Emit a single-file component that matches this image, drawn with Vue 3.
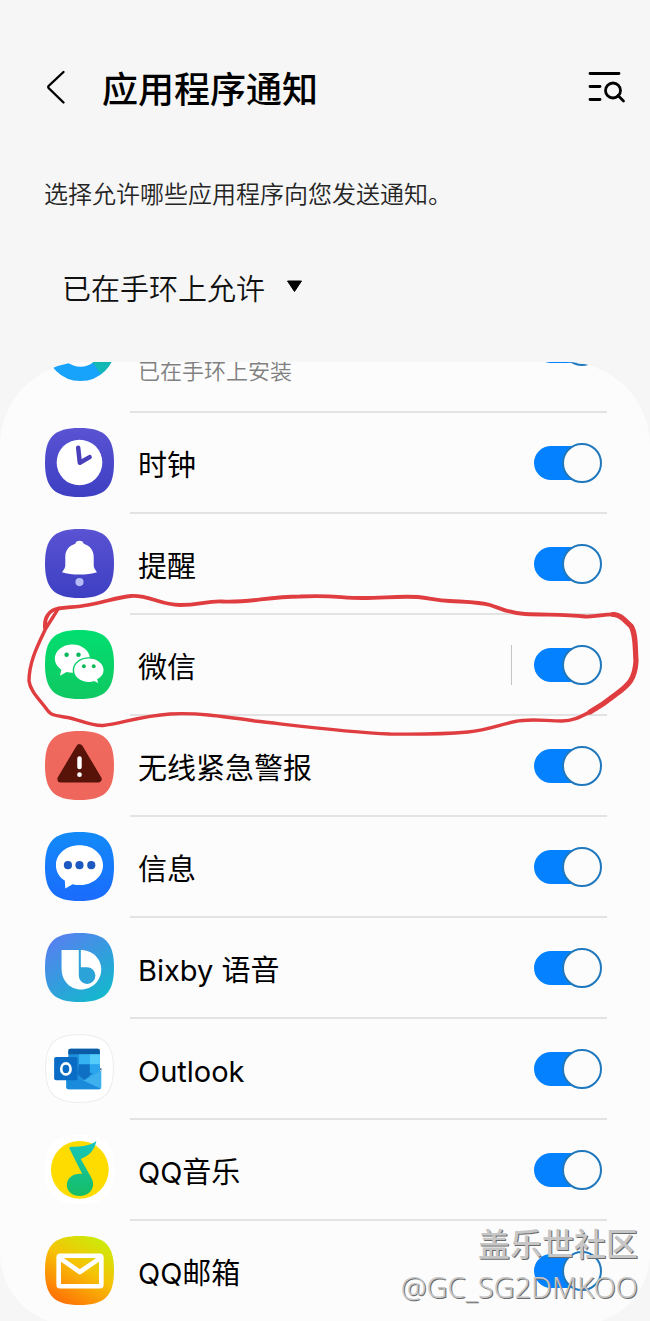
<template>
  <div class="screen">
    <header class="header">
      <button class="icon-btn" aria-label="返回">
        <svg width="24" height="36" viewBox="0 0 24 36">
          <path d="M19.500 2L4.600 16a1.600 1.600 0 0 0 0 2L19.500 32.500" class="line" />
        </svg>
      </button>
      <h1 class="title">应用程序通知</h1>
      <button class="icon-btn" aria-label="搜索">
        <svg width="40" height="36" viewBox="0 0 40 36">
          <path d="M4 3.500h29M4 16.500h10M4 29.500h10M32 25.500l5.500 5.500" class="line thick" />
          <circle cx="27" cy="20.500" r="7.500" class="line thick" />
        </svg>
      </button>
    </header>

    <p class="description">选择允许哪些应用程序向您发送通知。</p>

    <div class="filter">
      <select v-model="filter" class="filter-select" aria-label="筛选">
        <option value="allowed">已在手环上允许</option>
      </select>
      <svg class="filter-arrow" width="17" height="13" viewBox="0 0 17 13">
        <path d="M1.500 1h14L8.500 11.500z" stroke="#000" stroke-linejoin="round" />
      </svg>
    </div>

    <main class="card">
      <ul class="list">
        <li
          v-for="app in apps"
          :key="app.id"
          class="row"
          :class="{ tall: app.note, marked: app.marked }"
        >
          <svg class="app-icon" viewBox="0 0 68 68">
            <defs>
              <linearGradient :id="'bg-' + app.id" :x1="app.from || 0" y1="0" :x2="app.to || 0" y2="1">
                <stop
                  v-for="(color, index) in app.colors"
                  :key="index"
                  :offset="index / (app.colors.length - 1)"
                  :stop-color="color"
                />
              </linearGradient>
            </defs>
            <path
              v-if="app.id !== 'wearable'"
              d="M34 0C59 0 68 9 68 34S59 68 34 68 0 59 0 34 9 0 34 0z"
              :fill="'url(#bg-' + app.id + ')'"
            />

            <g v-if="app.id === 'wearable'" fill="none" stroke-width="14">
              <circle cx="35" cy="34" r="27" stroke="#17a2fb" />
              <path d="M62 34a27 27 0 0 1-11 21.500" stroke="#12b9b4" />
            </g>

            <g v-else-if="app.id === 'clock'">
              <circle cx="34" cy="34" r="22.500" fill="#fff" />
              <path d="M32.700 19.500L34.300 34.300L44 28.700" fill="none" stroke="#4a3fba" stroke-width="4.400" stroke-linecap="round" stroke-linejoin="round" />
            </g>

            <g v-else-if="app.id === 'reminder'">
              <path d="M34 11.500c2.200 0 3.700 1.200 4.200 3C44.500 16.500 48 21 48 27.500V36c0 2 1.300 4 3.200 6.700-9 3-25.400 3-34.400 0C18.700 40 20 38 20 36v-8.500c0-6.500 3.500-11 9.800-13 .5-1.800 2-3 4.200-3z" fill="#fff" />
              <circle cx="34" cy="52.300" r="4" fill="#b6bbf6" />
            </g>

            <g v-else-if="app.id === 'wechat'" fill="#fff">
              <path d="M27 14.200c-9.700 0-17.300 6.200-17.300 14 0 4.500 2.400 8.300 6.400 10.900L14.700 45l6.600-3.700c1.800.5 3.700.8 5.700.8 9.600 0 17.300-6.200 17.300-13.900S36.600 14.200 27 14.200z" />
              <path d="M43.300 27.500c-8.600 0-15.300 5.400-15.300 12.200s6.700 12.200 15.300 12.200c1.800 0 3.500-.3 5.100-.8l5 2.400-1.200-4.600c3.900-2.200 6.200-5.500 6.200-9.200 0-6.800-6.600-12.200-15.100-12.200z" stroke="#07cf68" stroke-width="1.400" />
              <g fill="#07b85b">
                <circle cx="21.300" cy="24.300" r="2.200" />
                <circle cx="33" cy="24.300" r="2.200" />
                <circle cx="38.300" cy="35.700" r="1.900" />
                <circle cx="48" cy="35.700" r="1.900" />
              </g>
            </g>

            <g v-else-if="app.id === 'alert'">
              <path d="M34 16.500L52.300 47.300H15.700z" fill="#581309" stroke="#581309" stroke-width="7" stroke-linejoin="round" />
              <path d="M34 27v8.500" stroke="#fff" stroke-width="4.400" stroke-linecap="round" />
              <circle cx="34" cy="43" r="2.300" fill="#fff" />
            </g>

            <g v-else-if="app.id === 'messages'">
              <path d="M34 13C21 13 10.800 21.500 10.800 32.700c0 6.400 3.200 11.600 8.700 15.200L20 55.700l7.300-4.300c2.200.6 4.400.9 6.700.9 13 0 23.200-8.400 23.200-19.600S47 13 34 13z" fill="#fff" />
              <g fill="#1b58bf">
                <circle cx="22.600" cy="32.700" r="4" />
                <circle cx="34" cy="32.700" r="4" />
                <circle cx="45.600" cy="32.700" r="4" />
              </g>
            </g>

            <g v-else-if="app.id === 'bixby'">
              <path d="M16.300 16.700H35c11.500 0 20.400 8.300 20.400 19.300S46.500 55.700 35.500 55.700 16.300 47 16.300 35z" fill="#fff" />
              <path d="M33.300 16V42a8.200 8.200 0 1 0 8.200-8.200h-6.200V16z" fill="#2ba2d8" />
            </g>

            <g v-else-if="app.id === 'outlook'">
              <path d="M34 .5C58.500.5 67.500 9.500 67.500 34S58.500 67.500 34 67.500.5 58.500.5 34 9.500.5 34 .5z" fill="none" stroke="#ececec" />
              <path d="M23 16.500a2 2 0 0 1 2-2h27a2 2 0 0 1 2 2V50H23z" fill="#1f8fdc" />
              <path d="M23 16.500a2 2 0 0 1 2-2h27a2 2 0 0 1 2 2V20H23z" fill="#0b5ba6" />
              <path d="M33.500 20H44v10H33.500z" fill="#35b2f2" />
              <path d="M44 20h10v10H44z" fill="#55cdfb" />
              <path d="M44 30h10v14H44z" fill="#2aa4ec" />
              <path d="M33.500 30H44v9H33.500z" fill="#1583d6" />
              <path d="M54 34.500l1.500-1v3z" fill="#123b6d" />
              <path d="M21 38l17 8 17.500-10V52.500a2 2 0 0 1-2 2H23a2 2 0 0 1-2-2z" fill="#3fb0ee" />
              <path d="M21 38l34 16-1.500.5H23a2 2 0 0 1-2-2z" fill="#1a8bdb" />
              <path d="M33.500 30H44v8.500h3L39 45l-7-5z" fill="#0f6fc2" />
              <rect x="9" y="22.700" width="23" height="23" rx="2" fill="#0a6cc4" />
              <ellipse cx="20.600" cy="34.400" rx="4.600" ry="5.400" fill="none" stroke="#fff" stroke-width="2.600" />
            </g>

            <g v-else-if="app.id === 'music'">
              <defs>
                <linearGradient id="note" x1="0" y1="0" x2="0" y2="1">
                  <stop offset="0" stop-color="#16c6bd" />
                  <stop offset="1" stop-color="#16bd63" />
                </linearGradient>
              </defs>
              <circle cx="34.300" cy="34.300" r="28.500" fill="#ffdc00" />
              <path d="M50.700 6c-7 4.800-15 5.600-24.700 5.600-2 0-2.400 1-1.700 2.300L36.600 38.300C28 37.500 21.500 42.500 21.500 49.300c0 6.300 5.700 10.900 12.900 10.900 7.600 0 13-5 13-11.800 0-3-.9-4.600-2.100-7L35.200 23.600C44 20.500 48.500 15 50.700 6z" fill="url(#note)" />
            </g>

            <g v-else-if="app.id === 'mail'" fill="none" stroke="#fff" stroke-width="4.600" stroke-linejoin="round">
              <rect x="13.500" y="19.500" width="42" height="30" rx="1.500" />
              <path d="M15 22L34.300 35.500L54 22" />
            </g>
          </svg>

          <div class="row-body">
            <label class="label" :for="'switch-' + app.id">
              <span class="name">{{ app.name }}</span>
              <span v-if="app.note" class="note">{{ app.note }}</span>
            </label>
            <span v-if="app.marked" class="separator"></span>
            <input :id="'switch-' + app.id" v-model="app.enabled" type="checkbox" class="switch" />
          </div>

          <svg v-if="app.marked" class="scribble" viewBox="0 590 650 150" preserveAspectRatio="none">
            <path d="M45 627C44 617 49 609 58 607.500C70 606 78 606 88 604C105 601 118 596 131 595C150 594 160 604 180 604C200 604 205 600 222 600.500C250 602 265 596 300 595.500C335 594 340 597 362 597C385 597 395 595 418 596C430 597 436 599.500 450 600C467 601 480 601 490 604C503 608 508 612 525 613C550 614 565 613 585 615.500C598 616 603 613 615 613.500" stroke-width="3.800" />
            <path d="M613 613.500C621 613 626 621 631 625C636 633 635 646 636 660C635 678 629 684 615 694C604 703 597 707 590 711" stroke-width="5.200" />
            <path d="M592 710C580 716 573 720 562 720C545 720 530 717 515 720.500C498 724 488 729 468 731C445 733 420 733.500 390 733C345 731 300 725 255 720C220 715 195 711.500 170 713C140 715 120 723 103 724.500C88 725 80 718 64 716C50 714 50 713 45 706C38 697 30 689 29 680C29 660 39 642 45 629C50 620 54 615 58 608" stroke-width="3.400" />
          </svg>
        </li>
      </ul>
    </main>

    <div class="watermark">
      <span class="watermark-site">盖乐世社区</span>
      <span class="watermark-user">@GC_SG2DMKOO</span>
    </div>
  </div>
</template>

<script setup>
import { ref } from 'vue'

const filter = ref('allowed')

const apps = ref([
  { id: 'wearable', name: '', note: '已在手环上安装', colors: ['#17a2fb', '#12b9b4'], enabled: true },
  { id: 'clock', name: '时钟', colors: ['#5a53d3', '#3d3fc2'], enabled: true },
  { id: 'reminder', name: '提醒', colors: ['#5a53d3', '#3d3fc2'], enabled: true },
  { id: 'wechat', name: '微信', colors: ['#02de70', '#0fc861'], enabled: true, marked: true },
  { id: 'alert', name: '无线紧急警报', colors: ['#f0695f', '#ee665c'], enabled: true },
  { id: 'messages', name: '信息', colors: ['#128af8', '#1a6bfd'], enabled: true },
  { id: 'bixby', name: 'Bixby 语音', colors: ['#5a7df2', '#12b9cc'], from: 0.1, to: 0.8, enabled: true },
  { id: 'outlook', name: 'Outlook', colors: ['#ffffff', '#ffffff'], enabled: true },
  { id: 'music', name: 'QQ音乐', colors: ['#ffffff', '#ffffff'], enabled: true },
  { id: 'mail', name: 'QQ邮箱', colors: ['#c4f20a', '#f6c206', '#ff7206'], from: 0.9, to: 0.3, enabled: true }
])
</script>

<style>
body {
  margin: 0;
  background-color: #f6f6f6;
}
</style>

<style scoped>
.screen {
  position: relative;
  display: flex;
  flex-direction: column;
  height: 100vh;
  overflow: hidden;
  background-color: #f6f6f6;
  color: #000;
  font-family: Inter, 'Noto Sans CJK SC', sans-serif;
}

.header {
  display: flex;
  align-items: center;
  height: 52px;
  padding: 62px 24px 0 44px;
}

.icon-btn {
  display: flex;
  padding: 0;
  border: none;
  background: none;
  cursor: pointer;
}

.line {
  fill: none;
  stroke: #000;
  stroke-width: 2.4;
  stroke-linecap: round;
}

.line.thick {
  stroke-width: 2.8;
}

.title {
  flex: 1;
  margin: 0 0 0 34px;
  padding-top: 4px;
  font-size: 36px;
  line-height: 52px;
  font-weight: 500;
}

.description {
  margin: 63px 44px 0;
  color: #252525;
  font-size: 24px;
  line-height: 36px;
  font-weight: 350;
}

.filter {
  display: flex;
  align-items: center;
  gap: 20px;
  margin: 52px 44px 49px 62px;
}

.filter-select {
  appearance: none;
  height: 48px;
  padding: 0;
  border: none;
  background: none;
  color: #111;
  font-family: inherit;
  font-size: 29px;
  font-weight: 350;
  cursor: pointer;
}

.filter-arrow {
  margin-bottom: 6px;
}

.card {
  flex: 1;
  min-height: 0;
  margin-bottom: -4px;
  overflow: hidden;
  border-radius: 84px 84px 72px 72px;
  background-color: #fcfcfc;
}

/* список прокручен, первая строка видна наполовину */
.list {
  margin: -81px 0 0;
  padding: 0;
  list-style: none;
}

.row {
  display: flex;
  align-items: center;
  height: 101px;
  padding: 0 43px 0 45px;
}

.row.tall {
  height: 132px;
}

.row.marked {
  position: relative;
  z-index: 1;
}

.app-icon {
  flex: none;
  width: 69px;
  height: 69px;
  margin-bottom: 2px;
}

.row-body {
  flex: 1;
  display: flex;
  align-items: center;
  align-self: stretch;
  margin-left: 16px;
  padding: 0 5px 0 8px;
  border-bottom: 2px solid #e3e3e3;
}

.row:last-child .row-body {
  border-color: transparent;
}

.label {
  flex: 1;
  display: flex;
  flex-direction: column;
  padding-top: 6px;
}

.name {
  min-height: 44px;
  font-size: 29px;
  line-height: 44px;
  font-weight: 390;
}

.note {
  color: #808080;
  font-size: 22px;
  line-height: 32px;
  font-weight: 350;
}

.separator {
  width: 1px;
  height: 40px;
  margin-right: 22px;
  background-color: #c4c4c4;
}

.switch {
  appearance: none;
  display: grid;
  align-items: center;
  width: 68px;
  height: 40px;
  margin: 0;
  cursor: pointer;
}

.switch::before,
.switch::after {
  content: '';
  grid-area: 1 / 1;
  box-sizing: border-box;
}

.switch::before {
  width: 66px;
  height: 34px;
  border-radius: 17px;
  background-color: #c4c4c4;
}

.switch::after {
  width: 40px;
  height: 40px;
  border: 2px solid #1f78bd;
  border-radius: 50%;
  background-color: #fcfcfc;
}

.switch:checked::before {
  background-color: #0381fe;
}

.switch:checked::after {
  justify-self: end;
}

.scribble {
  position: absolute;
  left: 0;
  top: -24px;
  width: 100%;
  height: 150px;
  fill: none;
  stroke: #df3d40;
  stroke-linecap: round;
  stroke-linejoin: round;
  pointer-events: none;
}

.watermark {
  position: absolute;
  right: 12px;
  bottom: 14px;
  display: flex;
  flex-direction: column;
  align-items: flex-end;
  color: #c6c6c6;
  text-shadow: 1px 1px 0 #6a6a6a;
  pointer-events: none;
}

.watermark-site {
  font-size: 32px;
  line-height: 44px;
  font-weight: 500;
}

.watermark-user {
  font-family: 'Noto Sans', sans-serif;
  font-size: 29px;
  line-height: 40px;
  font-weight: 300;
}
</style>
